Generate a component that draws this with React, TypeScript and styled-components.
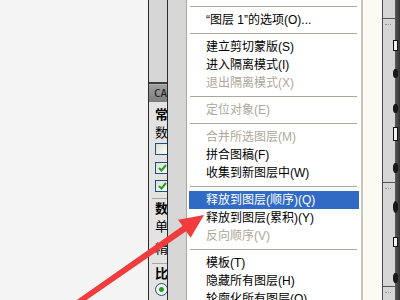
import React from 'react';
import styled, { createGlobalStyle } from 'styled-components';

// Estilos globales: sin margen, tamaño fijo de la ventana
const GlobalStyle = createGlobalStyle`
  html, body {
    margin: 0;
    padding: 0;
    width: 400px;
    height: 300px;
    overflow: hidden;
    background: #f4f4f4;
  }
`;

const Screen = styled.div`
  position: relative;
  display: flex;
  width: 400px;
  height: 300px;
  overflow: hidden;
  background: #f4f4f4;
  font-family: 'Liberation Sans', 'Noto Sans CJK SC', sans-serif;
`;

const Canvas = styled.div`
  flex: 0 0 148px;
  background: #f4f4f4;
`;

// Panel lateral izquierdo (recortado)
const SidePanel = styled.div`
  flex: 0 0 18px;
  display: flex;
  flex-direction: column;
  border-left: 1px solid #2b2b2b;
  border-right: 1px solid #2b2b2b;
  background: #e3e3e3;
  overflow: hidden;
`;

const PanelTop = styled.div`
  height: 82px;
  background: #d6d6d6;
  border-bottom: 2px solid #3c3c3c;
`;

const Tab = styled.div`
  height: 17px;
  line-height: 17px;
  padding-left: 5px;
  border-top: 1px solid #b4b4b4;
  background: linear-gradient(#a0a0a0, #7c7c7c);
  color: #1a1a1a;
  font-family: 'DejaVu Sans Mono', monospace;
  font-size: 11px;
  white-space: nowrap;
`;

const PanelBody = styled.div`
  display: flex;
  flex-direction: column;
  padding: 4px 0 0 6px;
`;

const Label = styled.div<{ $bold?: boolean; $mt?: number }>`
  height: 18px;
  line-height: 18px;
  margin-top: ${(p) => p.$mt ?? 0}px;
  font-size: 13px;
  font-weight: ${(p) => (p.$bold ? 700 : 400)};
  color: #000;
  white-space: nowrap;
`;

const CheckBox = styled.div<{ $mt: number }>`
  box-sizing: border-box;
  width: 13px;
  height: 12px;
  margin-top: ${(p) => p.$mt}px;
  border: 1px solid #1c5180;
  border-right: none;
  background: linear-gradient(135deg, #dcdcd6, #ffffff);
  display: flex;
  align-items: center;
  justify-content: center;
`;

const PanelRule = styled.div<{ $mt: number }>`
  height: 1px;
  margin: ${(p) => p.$mt}px 0 0 -3px;
  background: #aca899;
`;

const Radio = styled.div`
  box-sizing: border-box;
  width: 13px;
  height: 13px;
  border-radius: 50%;
  border: 1px solid #1c5180;
  background: radial-gradient(circle, #21a121 0 2px, #f4f4f0 3px);
`;

const Strip = styled.div`
  flex: 0 0 18px;
  background: #d7d7d7;
`;

// Menú contextual
const Menu = styled.ul`
  flex: 0 0 174px;
  margin: 0;
  padding: 2px 0 0;
  list-style: none;
  background: #fff;
  border-left: 1px solid #a7a79b;
  border-right: 2px solid #c6c6be;
`;

const Item = styled.li<{ $disabled?: boolean; $active?: boolean }>`
  height: 18px;
  line-height: 18px;
  margin: 0 2px;
  padding-left: 17px;
  font-size: 12px;
  white-space: nowrap;
  color: ${(p) => (p.$active ? '#fff' : p.$disabled ? '#aca899' : '#000')};
  background: ${(p) => (p.$active ? '#316ac5' : 'transparent')};
`;

const Separator = styled.li`
  height: 9px;
  display: flex;
  align-items: center;
  margin: 0 4px 0 3px;

  &::after {
    content: '';
    flex: 1;
    height: 1px;
    background: #aca899;
  }
`;

const Cream = styled.div`
  flex: 0 0 19px;
  background: #fbfbf4;
`;

// Panel derecho (recortado)
const Dock = styled.div`
  flex: 1;
  display: flex;
  border-left: 1px solid #474747;
  overflow: hidden;
`;

const DockColumn = styled.div`
  flex: 0 0 12px;
  display: flex;
  flex-direction: column;
  background: #d5d5d5;
`;

const DockSection = styled.div<{ $h: number }>`
  height: ${(p) => p.$h}px;
  flex-shrink: 0;
  border-bottom: 1px solid #555;
`;

const Grip = styled.div`
  height: 1px;
  margin: 5px 4px 0 2px;
  border-top: 1px dotted #9a9a9a;
`;

const IconStrip = styled.div`
  flex: 1;
  display: flex;
  flex-direction: column;
  align-items: flex-start;
  background: linear-gradient(90deg, #5a5a5a, #333);
`;

const Tile = styled.div<{ $mt: number; $h: number; $light?: boolean }>`
  width: 3px;
  height: ${(p) => p.$h}px;
  margin-top: ${(p) => p.$mt}px;
  margin-left: -2px;
  background: ${(p) => (p.$light ? '#f2f2f2' : '#1a1a1a')};
  border: 1px solid #111;
  border-radius: ${(p) => (p.$light ? '0' : '50%')};
`;

const Overlay = styled.svg`
  position: absolute;
  left: 0;
  top: 0;
  pointer-events: none;
`;

const Check = () => (
  <svg width="9" height="8" viewBox="0 0 9 8">
    <path d="M1 4 L3.5 6.5 L8 1" fill="none" stroke="#21a121" strokeWidth="2" />
  </svg>
);

const App: React.FC = () => {
  return (
    <>
      <GlobalStyle />
      <Screen>
        <Canvas />

        <SidePanel>
          <PanelTop />
          <Tab>CAD</Tab>
          <PanelBody>
            <Label $bold>常规</Label>
            <Label>数值</Label>
            <CheckBox $mt={1} />
            <CheckBox $mt={7}>
              <Check />
            </CheckBox>
            <CheckBox $mt={6}>
              <Check />
            </CheckBox>
            <PanelRule $mt={6} />
            <Label $bold $mt={1}>数值</Label>
            <Label>单位</Label>
            <Label $mt={4}>精度</Label>
            <PanelRule $mt={5} />
            <Label $bold $mt={1}>比例</Label>
            <Radio />
          </PanelBody>
        </SidePanel>

        <Strip />

        <Menu>
          <Separator />
          <Item>“图层 1”的选项(O)...</Item>
          <Separator />
          <Item>建立剪切蒙版(S)</Item>
          <Item>进入隔离模式(I)</Item>
          <Item $disabled>退出隔离模式(X)</Item>
          <Separator />
          <Item $disabled>定位对象(E)</Item>
          <Separator />
          <Item $disabled>合并所选图层(M)</Item>
          <Item>拼合图稿(F)</Item>
          <Item>收集到新图层中(W)</Item>
          <Separator />
          <Item $active>释放到图层(顺序)(Q)</Item>
          <Item>释放到图层(累积)(Y)</Item>
          <Item $disabled>反向顺序(V)</Item>
          <Separator />
          <Item>模板(T)</Item>
          <Item>隐藏所有图层(H)</Item>
          <Item>轮廓化所有图层(O)</Item>
        </Menu>

        <Cream />

        <Dock>
          <DockColumn>
            <DockSection $h={18} />
            <DockSection $h={163}>
              <Grip />
            </DockSection>
            <DockSection $h={103}>
              <Grip />
            </DockSection>
            <DockSection $h={20}>
              <Grip />
            </DockSection>
          </DockColumn>
          <IconStrip>
            <Tile $mt={40} $h={9} $light />
            <Tile $mt={18} $h={7} />
            <Tile $mt={26} $h={7} />
            <Tile $mt={14} $h={12} $light />
            <Tile $mt={22} $h={8} />
            <Tile $mt={28} $h={10} />
            <Tile $mt={24} $h={8} $light />
            <Tile $mt={26} $h={8} />
          </IconStrip>
        </Dock>

        {/* Flecha roja que señala el menú */}
        <Overlay width="400" height="300" viewBox="0 0 400 300">
          <polygon
            points="204,215 190.6,237.7 186.1,231.3 21.5,344.8 18.7,340.6 182.5,226.1 178,219.7"
            fill="#f03c3c"
          />
        </Overlay>
      </Screen>
    </>
  );
};

export default App;
